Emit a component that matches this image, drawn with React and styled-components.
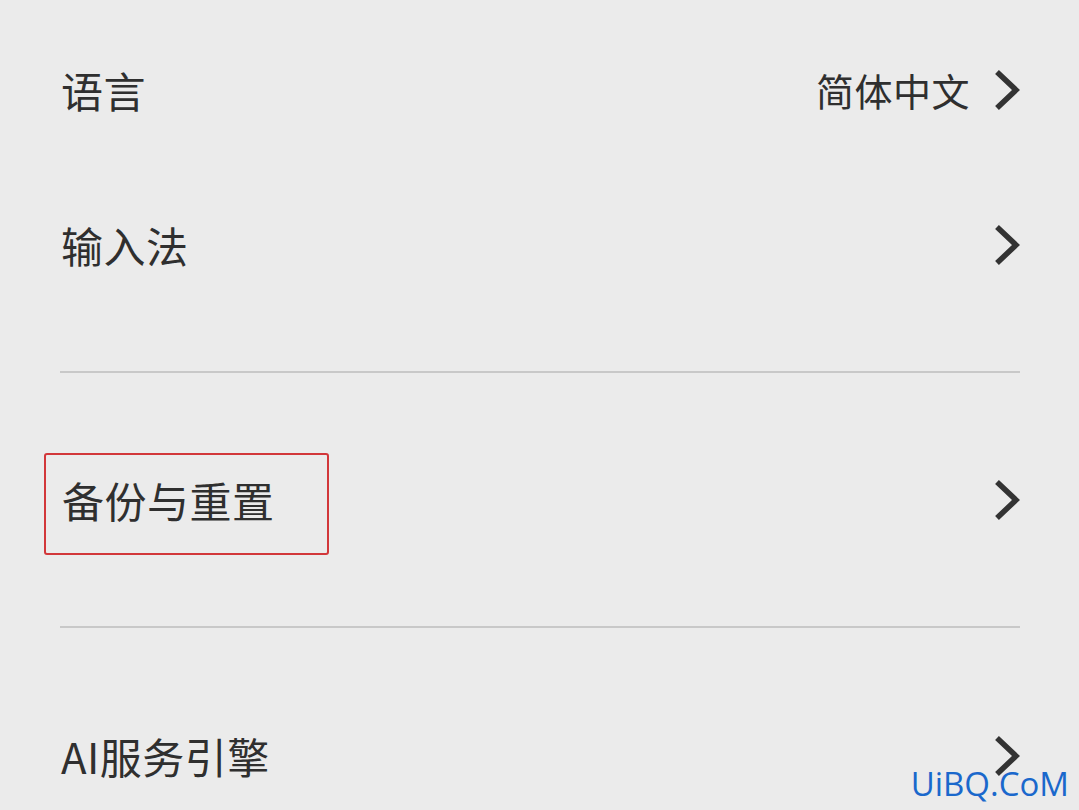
import styled, { createGlobalStyle } from "styled-components";

const GlobalStyle = createGlobalStyle`
  html, body {
    margin: 0;
    padding: 0;
    background: #ebebeb;
  }
  body {
    font-family: "Noto Sans CJK SC", "Noto Sans", sans-serif;
    color: #2f2f2f;
  }
`;

const settings = [
  { title: "语言", value: "简体中文", height: 180 },
  { title: "输入法", height: 130, dividerAfter: true, gapAfter: 61 },
  { title: "备份与重置", height: 253, highlight: true, dividerAfter: true },
  { title: "AI服务引擎", height: 256 },
];

const Chevron = () => (
  <ChevronIcon viewBox="0 0 26 40" aria-hidden="true">
    <polyline
      points="3,2 22,20 3,38"
      fill="none"
      stroke="#333"
      strokeWidth="5.5"
      strokeLinecap="butt"
      strokeLinejoin="miter"
    />
  </ChevronIcon>
);

const App = () => {
  return (
    <Page>
      <GlobalStyle />
      <List>
        {settings.map((item) => (
          <Section key={item.title}>
            <Row $height={item.height}>
              {item.highlight ? (
                <Highlight>
                  <Title>{item.title}</Title>
                </Highlight>
              ) : (
                <Title>{item.title}</Title>
              )}
              <Trailing>
                {item.value && <Value>{item.value}</Value>}
                <Chevron />
              </Trailing>
            </Row>
            {item.gapAfter && <Spacer $height={item.gapAfter} />}
            {item.dividerAfter && <Divider />}
          </Section>
        ))}
      </List>
      <Watermark>UiBQ.CoM</Watermark>
    </Page>
  );
};

export default App;

const Page = styled.div`
  position: relative;
  width: 1079px;
  height: 810px;
  overflow: hidden;
  background: #ebebeb;
`;

const List = styled.div`
  display: flex;
  flex-direction: column;
  padding: 0 59px 0 60px;
`;

const Section = styled.div`
  display: flex;
  flex-direction: column;
`;

const Row = styled.div`
  height: ${(p) => p.$height}px;
  display: flex;
  align-items: center;
  justify-content: space-between;
`;

const Title = styled.span`
  font-size: 42px;
  line-height: 1;
  color: #2f2f2f;
  padding-left: 1px;
  letter-spacing: 0.5px;
`;

const Highlight = styled.span`
  box-sizing: border-box;
  display: inline-flex;
  align-items: center;
  height: 102px;
  margin: 9px 0 0 -16px;
  padding: 0 52px 9px 15px;
  border: 2px solid #d2373a;
  border-radius: 3px;
`;

const Trailing = styled.div`
  display: flex;
  align-items: center;
  gap: 24px;
`;

const Value = styled.span`
  font-size: 38px;
  line-height: 1;
  color: #2f2f2f;
  letter-spacing: 0.5px;
`;

const ChevronIcon = styled.svg`
  width: 26px;
  height: 40px;
  display: block;
`;

const Spacer = styled.div`
  height: ${(p) => p.$height}px;
`;

const Divider = styled.div`
  height: 2px;
  background: #c8c8c8;
`;

const Watermark = styled.span`
  position: absolute;
  right: 10px;
  bottom: 6px;
  font-family: "Open Sans", "DejaVu Sans", sans-serif;
  font-size: 33px;
  line-height: 1.2;
  color: #1a68cc;
`;
